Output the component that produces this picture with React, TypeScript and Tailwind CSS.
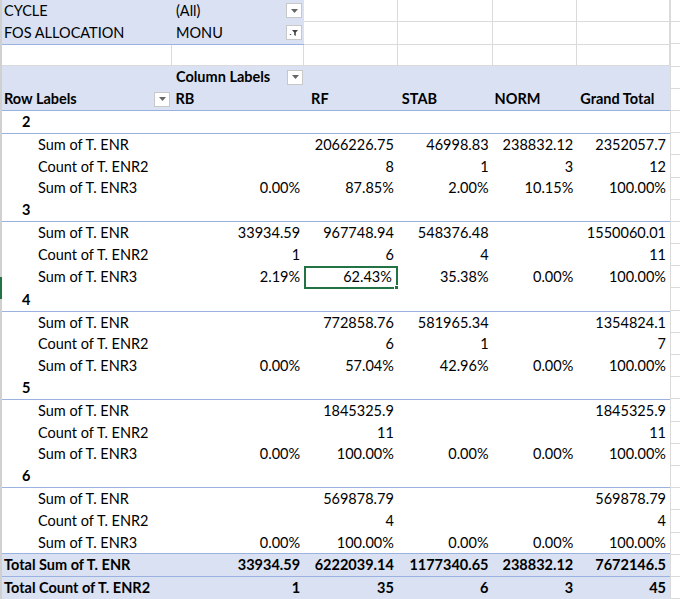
import React from "react";

const C = ["w-[171px]", "w-[132px]", "w-[94px]", "w-[95px]", "w-[85px]", "w-[93px]"];
const H = "h-[23.15px]";
const font = { fontFamily: "Lato, 'Open Sans', sans-serif" };

const groups: [string, string[][]][] = [
  ["2", [["", "2066226.75", "46998.83", "238832.12", "2352057.7"], ["", "8", "1", "3", "12"], ["0.00%", "87.85%", "2.00%", "10.15%", "100.00%"]]],
  ["3", [["33934.59", "967748.94", "548376.48", "", "1550060.01"], ["1", "6", "4", "", "11"], ["2.19%", "62.43%", "35.38%", "0.00%", "100.00%"]]],
  ["4", [["", "772858.76", "581965.34", "", "1354824.1"], ["", "6", "1", "", "7"], ["0.00%", "57.04%", "42.96%", "0.00%", "100.00%"]]],
  ["5", [["", "1845325.9", "", "", "1845325.9"], ["", "11", "", "", "11"], ["0.00%", "100.00%", "0.00%", "0.00%", "100.00%"]]],
  ["6", [["", "569878.79", "", "", "569878.79"], ["", "4", "", "", "4"], ["0.00%", "100.00%", "0.00%", "0.00%", "100.00%"]]],
];
const labels = ["Sum of T. ENR", "Count of T. ENR2", "Sum of T. ENR3"];

function Drop({ filter }: { filter?: boolean }) {
  return (
    <div className="w-[16px] h-[15px] bg-white border border-[#c8c8c8] flex items-center justify-center">
      {filter ? (
        <svg width="10" height="8" viewBox="0 0 10 8"><path d="M3 1h6L6.8 3.6V7L5.2 6V3.6Z" fill="#444" /><path d="M0.5 5h2L1.5 6.3Z" fill="#444" /></svg>
      ) : (
        <svg width="7" height="4" viewBox="0 0 7 4"><path d="M0 0h7L3.5 4Z" fill="#666" /></svg>
      )}
    </div>
  );
}

function GridCells({ from }: { from: number }) {
  return (
    <>
      {C.slice(from).map((c, i) => <div key={i} className={`${c} h-full border-r border-b border-[#dadada]`} />)}
    </>
  );
}

export default function App() {
  const rows: React.ReactNode[] = [];
  groups.forEach(([g, data], gi) => {
    rows.push(
      <div key={"g" + g} className={`flex ${H} bg-white items-center`}>
        <div className="pl-[20px] font-bold">{g}</div>
      </div>
    );
    data.forEach((vals, ri) => {
      rows.push(
        <div key={g + ri} className={`flex ${H} bg-white items-center ${ri === 0 ? "border-t border-[#9bb2e0]" : ""}`}>
          <div className={`${C[0]} pl-[36px]`}>{labels[ri]}</div>
          {vals.map((v, ci) => {
            const sel = gi === 1 && ri === 2 && ci === 1;
            return (
              <div key={ci} className={`${C[ci + 1]} pr-[4px] h-full flex items-center justify-end ${sel ? "border-2 border-[#217346] relative" : ""}`}>
                {v}
                {sel && <div className="absolute -right-[3px] -bottom-[3px] w-[5px] h-[5px] bg-[#217346] border border-white" />}
              </div>
            );
          })}
        </div>
      );
    });
  });

  return (
    <div className="w-[680px] h-[599px] overflow-hidden bg-white text-[14.5px] text-black relative flex" style={font}>
      <div className="w-[2px] h-full bg-[#d0d0d0] relative">
        <div className="absolute left-0 top-[277px] w-[2px] h-[22px] bg-[#217346]" />
      </div>
      <div className="flex flex-col w-[668px]">
        <div className={`flex ${H} items-center`}>
          <div className="flex items-center bg-[#d9e1f2] h-full w-[303px]">
            <div className={`${C[0]} pl-[2px]`}>CYCLE</div>
            <div className="pl-[3px] flex-1">(All)</div>
            <div className="mr-[2px]"><Drop /></div>
          </div>
          <GridCells from={2} />
        </div>
        <div className={`flex ${H} items-center`}>
          <div className="flex items-center bg-[#d9e1f2] h-full border-b border-[#9bb2e0] w-[303px]">
            <div className={`${C[0]} pl-[2px]`}>FOS ALLOCATION</div>
            <div className="pl-[3px] flex-1">MONU</div>
            <div className="mr-[2px]"><Drop filter /></div>
          </div>
          <GridCells from={2} />
        </div>
        <div className={`flex ${H}`}>
          <GridCells from={0} />
        </div>
        <div className={`flex ${H} items-center bg-[#d9e1f2] font-bold`}>
          <div className={C[0]} />
          <div className={`${C[1]} pl-[3px] flex items-center justify-between pr-[2px]`}>Column Labels<Drop /></div>
        </div>
        <div className={`flex ${H} items-center bg-[#d9e1f2] font-bold border-b border-[#9bb2e0]`}>
          <div className={`${C[0]} pl-[2px] flex items-center justify-between pr-[2px]`}>Row Labels<Drop /></div>
          <div className={`${C[1]} pl-[3px]`}>RB</div>
          <div className={`${C[2]} pl-[7px]`}>RF</div>
          <div className={`${C[3]} pl-[4px]`}>STAB</div>
          <div className={`${C[4]} pl-[2px]`}>NORM</div>
          <div className={`${C[5]} pl-[3px]`}>Grand Total</div>
        </div>
        {rows}
        <div className={`flex ${H} items-center bg-[#d9e1f2] font-bold border-t border-[#9bb2e0]`}>
          <div className={`${C[0]} pl-[2px]`}>Total Sum of T. ENR</div>
          {["33934.59", "6222039.14", "1177340.65", "238832.12", "7672146.5"].map((v, i) => <div key={i} className={`${C[i + 1]} text-right pr-[4px]`}>{v}</div>)}
        </div>
        <div className={`flex ${H} items-center bg-[#d9e1f2] font-bold border-t border-[#9bb2e0]`}>
          <div className={`${C[0]} pl-[2px]`}>Total Count of T. ENR2</div>
          {["1", "35", "6", "3", "45"].map((v, i) => <div key={i} className={`${C[i + 1]} text-right pr-[4px]`}>{v}</div>)}
        </div>
      </div>
      <div className="flex-1 flex flex-col border-l border-[#dadada]">
        {Array.from({ length: 27 }).map((_, i) => <div key={i} className={`${H} border-b border-[#dadada]`} />)}
      </div>
    </div>
  );
}
